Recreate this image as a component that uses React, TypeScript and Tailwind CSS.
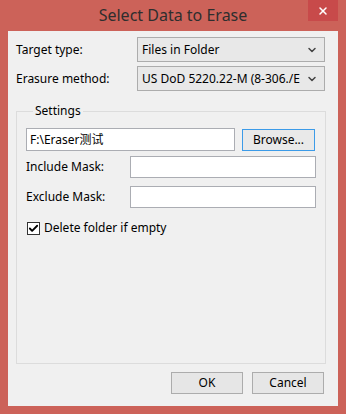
import { Check, ChevronDown, X } from "lucide-react";

function Combo({ value }: { value: string }) {
  return (
    <div className="flex items-center w-[188px] h-[25px] border border-[#acacac] bg-[#e8e8e8] pl-[4px] pr-[6px]">
      <span className="flex-1 overflow-hidden whitespace-nowrap">{value}</span>
      <ChevronDown size={12} strokeWidth={3} className="text-[#444] ml-[2px]" />
    </div>
  );
}

function Btn({ label, focused }: { label: string; focused?: boolean }) {
  return (
    <div
      className={
        "flex items-center justify-center h-[22px] border " +
        (focused ? "border-[#3c9be8] bg-[#e9e9e9]" : "border-[#acacac] bg-[#e6e6e6]")
      }
    >
      {label}
    </div>
  );
}

export default function App() {
  return (
    <div
      className="w-[346px] h-[414px] bg-[#cc6259] flex flex-col text-[12px] text-black overflow-hidden"
      style={{ fontFamily: '"Noto Sans", "Noto Sans CJK SC", sans-serif' }}
    >
      <div className="h-[31px] flex items-start">
        <div className="flex-1 text-center text-[16px] text-[#2e2e2e] pt-[3px] pl-[38px]">Select Data to Erase</div>
        <div className="w-[30px] h-[21px] bg-[#c84a4a] flex items-center justify-center mr-[8px]">
          <X size={12} strokeWidth={3} className="text-white" />
        </div>
      </div>

      <div className="flex-1 mx-[8px] mb-[8px] bg-[#f0f0f0] pt-[6px] px-[8px] flex flex-col">
        <div className="flex items-center">
          <span className="w-[121px]">Target type:</span>
          <Combo value="Files in Folder" />
        </div>
        <div className="flex items-center mt-[4px]">
          <span className="w-[121px]">Erasure method:</span>
          <Combo value="US DoD 5220.22-M (8-306./E" />
        </div>

        <fieldset className="mt-[12px] w-[309px] h-[261px] border border-[#dcdcdc] px-[9px] pt-[9px]">
          <legend className="ml-[7px] px-[2px] leading-[16px]">Settings</legend>
          <div className="flex items-center">
            <div className="w-[209px] h-[23px] border border-[#abadb3] bg-white flex items-center px-[3px]">F:\Eraser测试</div>
            <div className="ml-[7px] w-[73px]">
              <Btn label="Browse..." focused />
            </div>
          </div>
          <div className="flex items-center mt-[5px]">
            <span className="w-[104px]">Include Mask:</span>
            <div className="w-[186px] h-[22px] border border-[#abadb3] bg-white" />
          </div>
          <div className="flex items-center mt-[8px]">
            <span className="w-[104px]">Exclude Mask:</span>
            <div className="w-[186px] h-[22px] border border-[#abadb3] bg-white" />
          </div>
          <div className="flex items-center mt-[11px]">
            <div className="w-[13px] h-[13px] border border-[#333] bg-white flex items-center justify-center ml-[1px]">
              <Check size={11} strokeWidth={4} className="text-black" />
            </div>
            <span className="ml-[4px]">Delete folder if empty</span>
          </div>
        </fieldset>

        <div className="flex justify-end mt-[8px] pr-[6px] gap-[9px]">
          <div className="w-[72px]">
            <Btn label="OK" />
          </div>
          <div className="w-[72px]">
            <Btn label="Cancel" />
          </div>
        </div>
      </div>
    </div>
  );
}
